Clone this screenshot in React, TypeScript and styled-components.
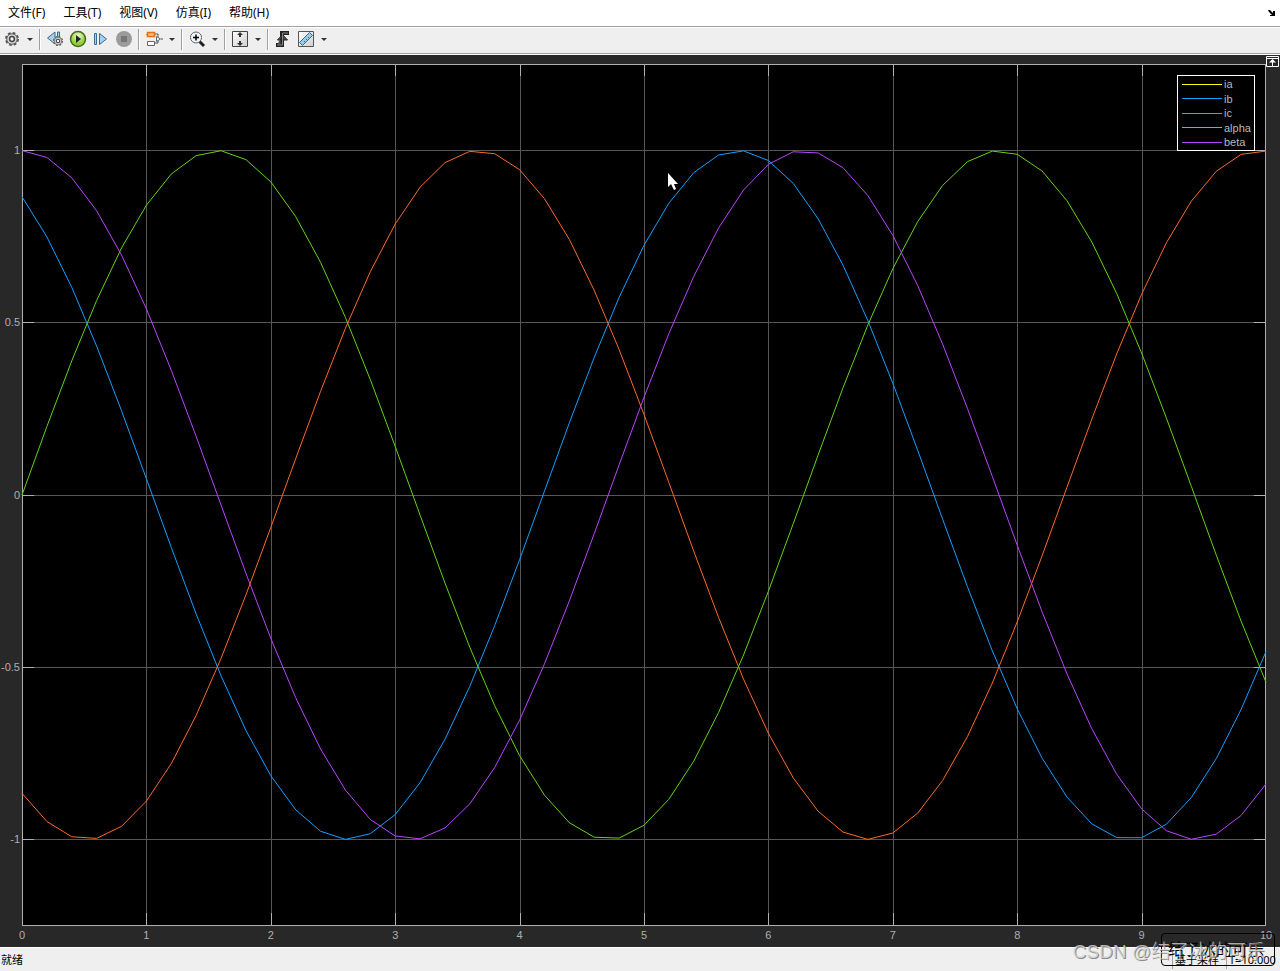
import React, { useLayoutEffect, useRef, useState } from "react";
import styled, { createGlobalStyle } from "styled-components";

const GlobalStyle = createGlobalStyle`
  * { box-sizing: border-box; }
  body { margin: 0; background: #282828; }
  button { font: inherit; }
`;

const uiFont = `"Noto Sans", "Noto Sans CJK SC", sans-serif`;

const Window = styled.div`
  display: flex;
  flex-direction: column;
  height: 100vh;
  min-height: 400px;
  background: #282828;
  color: #000;
  font-family: ${uiFont};
  font-size: 12px;
`;

const MenuBar = styled.nav`
  display: flex;
  align-items: center;
  height: 26px;
  padding: 0 4px;
  background: #fff;
`;

const MenuItem = styled.button`
  border: 0;
  background: none;
  color: #000;
  padding: 0 4px;
  margin-right: 10px;
  line-height: 18px;
  white-space: nowrap;
`;

const DockButton = styled.button`
  display: flex;
  margin-left: auto;
  padding: 0;
  border: 0;
  background: none;
`;

const Toolbar = styled.div`
  display: flex;
  align-items: center;
  height: 29px;
  padding: 0 3px 3px;
  background: #efefef;
  border-top: 1px solid #a0a0a0;
  border-bottom: 1px solid #fff;
  box-shadow: inset 0 1px #fff, inset 0 -1px #a0a0a0;
`;

const ToolButton = styled.button`
  display: flex;
  padding: 0;
  margin-right: 5px;
  border: 0;
  background: none;
`;

const Arrow = styled.button`
  display: flex;
  width: 8px;
  justify-content: center;
  margin-right: 5px;
  border: 0;
  padding: 0;
  background: none;
  &::after {
    content: "";
    border: 3px solid transparent;
    border-top-color: #333;
    border-bottom: 0;
  }
`;

const Separator = styled.span`
  width: 2px;
  height: 21px;
  margin-right: 5px;
  border-left: 1px solid #a0a0a0;
  border-right: 1px solid #fff;
`;

const Scope = styled.main`
  position: relative;
  flex: 1;
  min-height: 0;
  overflow: hidden;
  background: #282828;
`;

const Chart = styled.svg`
  display: block;
  width: 100%;
  height: 100%;
  font-family: "Liberation Sans", Arial, sans-serif;
  font-size: 11px;
`;

const Legend = styled.ul`
  position: absolute;
  top: 20px;
  right: 25px;
  width: 78px;
  height: 76px;
  margin: 0;
  padding: 1px 4px;
  display: flex;
  flex-direction: column;
  justify-content: space-between;
  list-style: none;
  border: 1px solid #fff;
  background: #000;
  color: #b9b9b9;
  font: 11px/14px "Liberation Sans", Arial, sans-serif;
`;

const LegendItem = styled.li<{ $color: string }>`
  display: flex;
  align-items: center;
  gap: 2px;
  &::before {
    content: "";
    flex: none;
    width: 40px;
    height: 1px;
    background: ${(p) => p.$color};
  }
`;

const ExpandButton = styled.button`
  position: absolute;
  top: 1px;
  right: 1px;
  display: flex;
  padding: 0;
  border: 0;
  background: none;
`;

const Pointer = styled.svg`
  position: absolute;
  left: 52%;
  top: 13%;
`;

const StatusBar = styled.footer`
  position: relative;
  display: flex;
  align-items: center;
  height: 24px;
  padding: 0 4px 0 1px;
  background: #efefef;
  border-top: 1px solid #fff;
  font-size: 11px;
  line-height: 18px;
`;

const StatusPanel = styled.span<{ $width: number }>`
  width: ${(p) => p.$width}px;
  padding-left: 2px;
  border-left: 1px solid #a0a0a0;
  white-space: nowrap;
`;

const Filler = styled.span`
  flex: 1;
`;

const NameBox = styled.div`
  position: absolute;
  right: 5px;
  bottom: 5px;
  width: 114px;
  height: 33px;
  padding: 5px 6px;
  border: 1px solid #000;
  border-radius: 4px;
  font-size: 16px;
  line-height: 20px;
  white-space: nowrap;
`;

const Watermark = styled.div`
  position: absolute;
  right: 15px;
  bottom: 6px;
  font-family: "Liberation Sans", "Noto Sans CJK SC", sans-serif;
  font-size: 19px;
  font-weight: 300;
  line-height: 26px;
  color: rgba(215, 215, 215, 0.8);
  text-shadow: 1px 1px 0 rgba(110, 110, 110, 0.8);
  white-space: nowrap;
  pointer-events: none;
`;

const samples = Array.from({ length: 51 }, (_, i) => i / 5);
const third = (2 * Math.PI) / 3;

const signals = [
  { name: "ia", color: "#ffff11", f: (t: number) => Math.sin(t) },
  { name: "ib", color: "#139fff", f: (t: number) => Math.sin(t + third) },
  { name: "ic", color: "#ff6929", f: (t: number) => Math.sin(t - third) },
  { name: "alpha", color: "#64d413", f: (t: number) => Math.sin(t) },
  { name: "beta", color: "#b746ff", f: (t: number) => Math.cos(t) },
];

// ia and alpha coincide, so only the upper trace is stroked
const traces = signals.filter((s) => s.name !== "ia");

const xTicks = [0, 1, 2, 3, 4, 5, 6, 7, 8, 9, 10];
const yTicks = [1, 0.5, 0, -0.5, -1];

function Plot() {
  const ref = useRef<SVGSVGElement>(null);
  const [size, setSize] = useState({ w: 1280, h: 892 });
  useLayoutEffect(() => {
    const el = ref.current;
    if (!el) return;
    const measure = () => {
      const r = el.getBoundingClientRect();
      setSize({ w: Math.round(r.width), h: Math.round(r.height) });
    };
    measure();
    const observer = new ResizeObserver(measure);
    observer.observe(el);
    return () => observer.disconnect();
  }, []);

  const left = 22;
  const top = 9;
  const right = size.w - 14;
  const bottom = size.h - 22;
  const x = (t: number) => left + ((right - left) * t) / 10;
  const y = (v: number) => top + ((bottom - top) * (1.25 - v)) / 2.5;
  // centre of the nearest pixel, for sharp hairlines
  const px = (n: number) => Math.round(n) + 0.5;

  return (
    <Chart ref={ref} role="img" aria-label="ia, ib, ic, alpha, beta">
      <rect x={left} y={top} width={right - left} height={bottom - top} fill="#000" />
      <g stroke="#575757">
        {xTicks.slice(1, -1).map((t) => (
          <path key={t} d={`M${px(x(t))} ${top}V${bottom}`} />
        ))}
        {yTicks.map((v) => (
          <path key={v} d={`M${left} ${px(y(v))}H${right}`} />
        ))}
      </g>
      <g stroke="#afafaf" fill="none">
        <rect x={left + 0.5} y={top + 0.5} width={right - left - 1} height={bottom - top} />
        {xTicks.slice(1, -1).map((t) => (
          <path key={t} d={`M${px(x(t))} ${top}v12M${px(x(t))} ${bottom}v-12`} />
        ))}
        {yTicks.map((v) => (
          <path key={v} d={`M${left} ${px(y(v))}h12M${right} ${px(y(v))}h-12`} />
        ))}
      </g>
      {traces.map((s) => (
        <polyline
          key={s.name}
          fill="none"
          stroke={s.color}
          points={samples.map((t) => `${x(t)},${y(s.f(t)) + 0.5}`).join(" ")}
        />
      ))}
      <g fill="#afafaf">
        {xTicks.map((t) => (
          <text key={t} x={x(t)} y={bottom + 14} textAnchor="middle">
            {t}
          </text>
        ))}
        {yTicks.map((v) => (
          <text key={v} x={left - 2} y={Math.round(y(v)) + 4} textAnchor="end">
            {v}
          </text>
        ))}
      </g>
    </Chart>
  );
}

const Gear = ({ x = 8, y = 8, s = 1 }: { x?: number; y?: number; s?: number }) => (
  <g transform={`translate(${x} ${y}) scale(${s})`}>
    <circle r="6" fill="#ccc" stroke="#555" strokeWidth="2" strokeDasharray="2.7 2" />
    <circle r="5.2" fill="#d4d4d4" stroke="#666" />
    <circle r="2.4" fill="#f4f4f4" stroke="#444" strokeWidth="1.5" />
  </g>
);

const icon = { width: 18, height: 18, viewBox: "0 0 18 18" };

export default function App() {
  return (
    <Window>
      <GlobalStyle />
      <MenuBar>
        {["文件(F)", "工具(T)", "视图(V)", "仿真(I)", "帮助(H)"].map((label) => (
          <MenuItem key={label}>{label}</MenuItem>
        ))}
        <DockButton aria-label="Dock">
          <svg width="8" height="8" viewBox="0 0 8 8">
            <path d="M0 1h2l3 3V2h2v5H2V6h2L1 3z" fill="#000" />
          </svg>
        </DockButton>
      </MenuBar>
      <Toolbar role="toolbar">
        <ToolButton aria-label="Settings">
          <svg {...icon}>
            <Gear x={9} y={9} />
          </svg>
        </ToolButton>
        <Arrow aria-label="Settings menu" />
        <Separator />
        <ToolButton aria-label="Step back options">
          <svg {...icon}>
            <path d="M1.500 8 9 2v12zM11.500 2h2v9h-2z" fill="#a9d0ea" stroke="#3b6a90" />
            <Gear x={12} y={11} s={0.72} />
          </svg>
        </ToolButton>
        <ToolButton aria-label="Run">
          <svg {...icon}>
            <defs>
              <radialGradient id="run" cy="0.3">
                <stop stopColor="#f4fbd8" />
                <stop offset="1" stopColor="#8fce3a" />
              </radialGradient>
            </defs>
            <circle cx="9" cy="9" r="7.500" fill="url(#run)" stroke="#456b1b" strokeWidth="1.500" />
            <path d="m7 5 5 4-5 4z" fill="#222" />
          </svg>
        </ToolButton>
        <ToolButton aria-label="Step forward">
          <svg {...icon}>
            <path d="M2.500 3.500h2v11h-2zM7.500 3.500v11l7-5.500z" fill="#a9d0ea" stroke="#3b6a90" />
          </svg>
        </ToolButton>
        <ToolButton aria-label="Stop" disabled>
          <svg {...icon}>
            <circle cx="9" cy="9" r="8" fill="#9b9b9b" />
            <path d="M6 6h6v6H6z" fill="#777" />
          </svg>
        </ToolButton>
        <Separator />
        <ToolButton aria-label="Highlight block">
          <svg {...icon}>
            <path d="M9 4h4v3M9 13h4v-3M16 9h2" fill="none" stroke="#555" />
            <path d="M2.500 2.500h7v4h-7z" fill="#ffbe78" stroke="#e0701c" strokeWidth="1.500" />
            <path d="M1 4.500h1" stroke="#e0701c" />
            <path d="M2.500 11.500h7v4h-7zM11.500 6.500v5l4-2.500z" fill="#fff" stroke="#666" />
          </svg>
        </ToolButton>
        <Arrow aria-label="Highlight menu" />
        <Separator />
        <ToolButton aria-label="Zoom in">
          <svg {...icon}>
            <path d="m11.500 11.500 4.500 4.500" stroke="#222" strokeWidth="3" />
            <circle cx="8" cy="7.500" r="5.500" fill="#eef5fa" stroke="#666" />
            <path d="M8 4.500v6M5 7.500h6" stroke="#000" strokeWidth="1.500" />
          </svg>
        </ToolButton>
        <Arrow aria-label="Zoom menu" />
        <Separator />
        <ToolButton aria-label="Scale axes">
          <svg {...icon}>
            <defs>
              <linearGradient id="panel" x2="1" y2="1">
                <stop stopColor="#fff" />
                <stop offset="1" stopColor="#cfcfcf" />
              </linearGradient>
            </defs>
            <path d="M1.500 1.500h15v15h-15z" fill="url(#panel)" stroke="#444" />
            <path d="M9 2 6 5h2v2h2V5h2zM9 16l-3-3h2v-2h2v2h2z" fill="#333" />
          </svg>
        </ToolButton>
        <Arrow aria-label="Scale menu" />
        <Separator />
        <ToolButton aria-label="Triggers">
          <svg {...icon}>
            <path d="M2 15h6V3h7" fill="none" stroke="#222" strokeWidth="4" />
            <path d="M8.500 4.500 3.500 10H7v5H3M8.500 4.500l5 5.500H10" fill="#555" stroke="#222" />
            <path d="M3 15h5.500V3H14" fill="none" stroke="#888" strokeWidth="1" />
          </svg>
        </ToolButton>
        <ToolButton aria-label="Measurements">
          <svg {...icon}>
            <path d="M1.500 1.500h15v15h-15z" fill="url(#panel)" stroke="#555" />
            <path d="m2.500 12.500 10-10 3 3-10 10z" fill="#9ccbe5" stroke="#376b8a" />
            <path d="m7 11 1 1m1-3 1 1m1-3 1 1" stroke="#376b8a" />
          </svg>
        </ToolButton>
        <Arrow aria-label="Measurements menu" />
      </Toolbar>
      <Scope>
        <Plot />
        <Legend>
          {signals.map((s) => (
            <LegendItem key={s.name} $color={s.color}>
              {s.name}
            </LegendItem>
          ))}
        </Legend>
        <ExpandButton aria-label="Maximize axes">
          <svg width="13" height="11" viewBox="0 0 13 11">
            <path d="M.5.5h12v10H.5zM0 2.500h13" fill="none" stroke="#fff" />
            <path d="M6.500 3 3 6.500h3V10h1V6.500h3z" fill="#fff" />
          </svg>
        </ExpandButton>
        <Pointer width="13" height="20" viewBox="0 0 13 20">
          <path d="M2 2v14l3-3 3 6 2-1-2-5h4z" fill="#fff" />
        </Pointer>
      </Scope>
      <StatusBar>
        <span>就绪</span>
        <Filler />
        <StatusPanel $width={54}>基于采样</StatusPanel>
        <StatusPanel $width={50}>T=10.000</StatusPanel>
        <NameBox>结了冰的可乐</NameBox>
        <Watermark>CSDN @结了冰的可乐</Watermark>
      </StatusBar>
    </Window>
  );
}
